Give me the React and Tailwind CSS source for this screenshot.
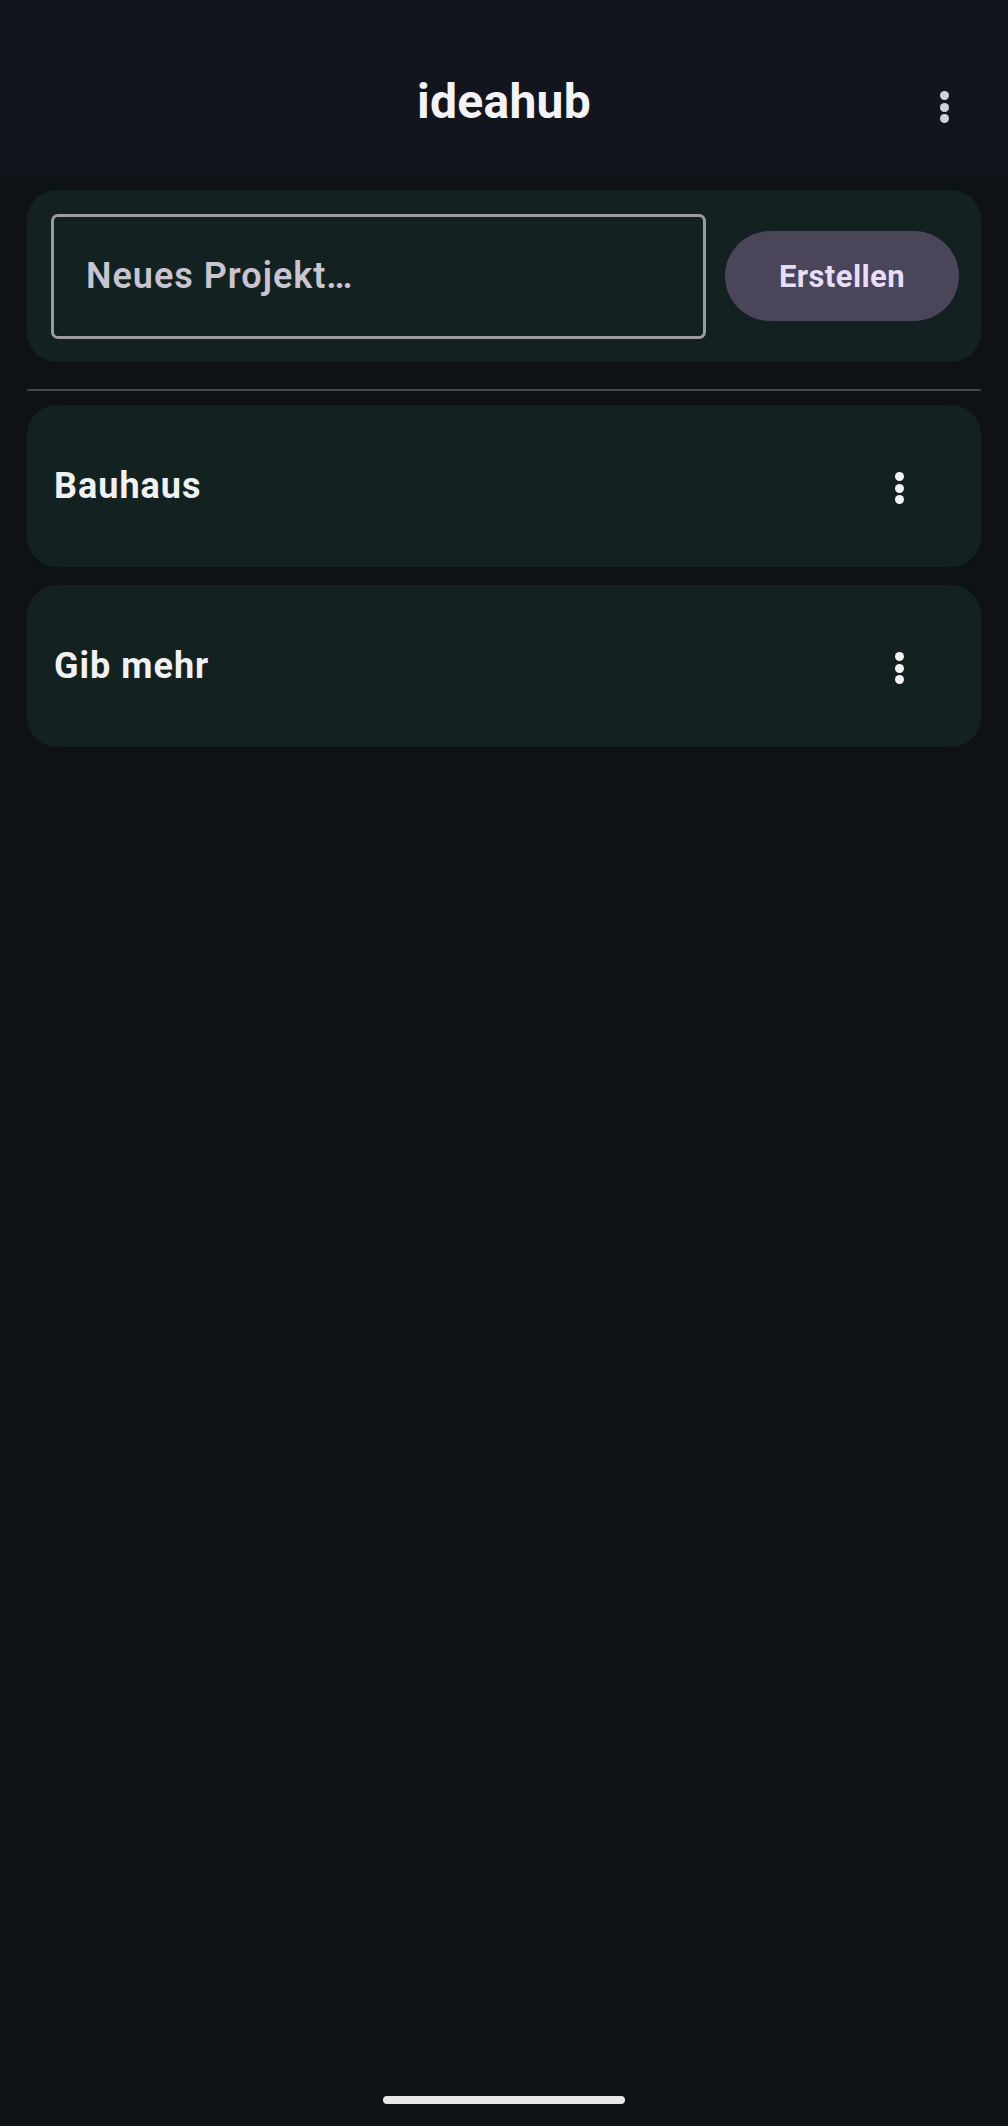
import React from "react";

function Kebab({ color = "bg-white", size = "w-[9px] h-[9px]", gap = "gap-[2.5px]" }) {
  return (
    <div className={`flex flex-col items-center ${gap}`}>
      <span className={`block rounded-full ${size} ${color}`} />
      <span className={`block rounded-full ${size} ${color}`} />
      <span className={`block rounded-full ${size} ${color}`} />
    </div>
  );
}

function ProjectCard({ name }) {
  return (
    <div className="h-[162px] rounded-[30px] bg-[#132120] flex items-center pl-[27px] pr-[77px]">
      <span className="flex-1 text-[36px] font-bold tracking-[1px] text-[#f1f1f3] leading-none">{name}</span>
      <div className="pt-[4px]">
        <Kebab color="bg-[#f2f2f2]" />
      </div>
    </div>
  );
}

export default function App() {
  return (
    <div
      className="w-[1008px] min-h-[2126px] bg-[#0e1116] flex flex-col"
      style={{ fontFamily: "Roboto, 'Noto Sans', sans-serif" }}
    >
      <header className="h-[176px] bg-[#12151d] relative flex justify-center pt-[74px]">
        <h1 className="text-[48px] font-bold text-[#f3f2f7] leading-[56px] tracking-[0.3px]">ideahub</h1>
        <div className="absolute right-[59px] top-[91px]">
          <Kebab color="bg-[#d4d0dc]" size="w-[9px] h-[9px]" gap="gap-[2.5px]" />
        </div>
      </header>

      <main className="px-[27px] flex flex-col">
        <div className="mt-[14px] h-[172px] rounded-[30px] bg-[#132120] flex items-center pl-[24px] pr-[22px] gap-[19px]">
          <div className="flex-1 h-[125px] border-[3px] border-[#9c9c9e] rounded-[7px] flex items-center pl-[32px]">
            <span className="text-[36px] font-semibold tracking-[1px] text-[#c9c5d0] leading-none">Neues Projekt…</span>
          </div>
          <button className="w-[234px] h-[90px] rounded-full bg-[#4a4559] flex items-center justify-center">
            <span className="text-[31px] font-bold tracking-[0.4px] text-[#e8def8] leading-none">Erstellen</span>
          </button>
        </div>

        <div className="mt-[27px] h-[2px] bg-[#46464c]" />

        <div className="mt-[14px] flex flex-col gap-[18px]">
          <ProjectCard name="Bauhaus" />
          <ProjectCard name="Gib mehr" />
        </div>
      </main>

      <div className="flex-1" />
      <div className="flex justify-center pb-[22px]">
        <div className="w-[242px] h-[8px] rounded-full bg-[#e8e8e8]" />
      </div>
    </div>
  );
}
